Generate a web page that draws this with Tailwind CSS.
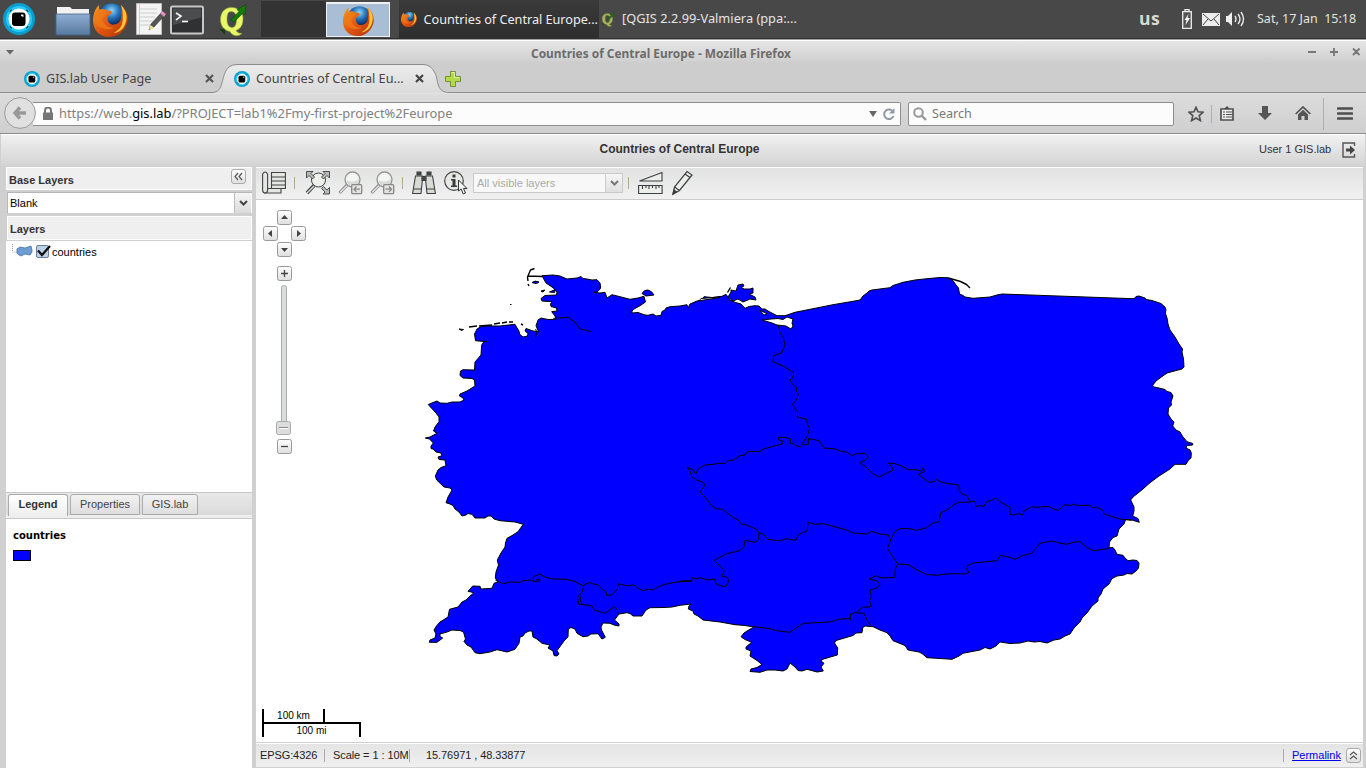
<!DOCTYPE html>
<html lang="en">
<head>
<meta charset="utf-8">
<title>Countries of Central Europe</title>
<script src="https://cdn.jsdelivr.net/npm/@tailwindcss/browser@4"></script>
</head>
<body class="w-[1366px] h-[768px] overflow-hidden bg-[#d0d0d0] font-['Liberation_Sans',sans-serif] text-[11px] text-black">
<svg width="0" height="0" class="absolute">
  <defs>
    <linearGradient id="fold" x2="0" y2="1"><stop stop-color="#90aed2"/><stop offset="1" stop-color="#57799f"/></linearGradient>
    <linearGradient id="flame" x2="1" y2="1"><stop stop-color="#f0a020"/><stop offset=".45" stop-color="#e65a10"/><stop offset="1" stop-color="#b03008"/></linearGradient>
    <radialGradient id="globe" cx=".5" cy=".25"><stop stop-color="#8fd6f8"/><stop offset=".5" stop-color="#2878bd"/><stop offset="1" stop-color="#0c2c66"/></radialGradient>
    <linearGradient id="btn" x2="0" y2="1"><stop stop-color="#fff"/><stop offset="1" stop-color="#dedede"/></linearGradient>
    <linearGradient id="tab" x2="0" y2="1"><stop stop-color="#ececec"/><stop offset="1" stop-color="#dadada"/></linearGradient>
    <symbol id="eye" viewBox="0 0 32 32"><circle cx="16" cy="16" r="16" fill="#0a9fcb"/><path d="M16 3a13 13 0 0 1 13 13 13 13 0 0 1-26 0A13 13 0 0 1 16 3" fill="#25c9fa"/><circle cx="16" cy="16" r="10.500" fill="#fff"/><path d="M7 9q0-2 2-2M25 9q0-2-2-2M7 23q0 2 2 2M25 23q0 2-2 2" fill="none" stroke="#123" stroke-width="1"/><rect x="9" y="9.500" width="13.500" height="13.500" rx="3" fill="#000"/><path d="M18 11.500h2.500v2.500l-2.500-1z" fill="#eee"/></symbol>
    <symbol id="fox" viewBox="0 0 34 34"><circle cx="18" cy="15" r="13.500" fill="url(#globe)"/><path d="M27 3c6 5 8 12 6 18-3 9-10 13-17 13C6 34 0 27 0 18 0 11 3 5 6 3v5c3-2 7-1 9 1 2-1 4 0 3 2-1 1-3 2-4 4 0 3 1 6 5 7 4 0 7-2 8-5 1-5 1-10 0-14z" fill="url(#flame)"/><path d="M27 3c6 6 7 12 4 19-2 5-7 8-11 8 6-3 9-7 9-14 0-5 0-9-2-13z" fill="#f8c838"/><path d="M1 18c0-5 2-9 5-11 4 0 6 2 8 4-3 1-5 3-5 6 1 5 5 8 12 8-9 4-18-1-20-7z" fill="#ee7b18" opacity=".75"/></symbol>
    <symbol id="q" viewBox="0 0 30 34"><path d="M1 26l6 1 0 5-2-2z" fill="#123f10"/><path d="M13.500 5C6 5 2.500 11 2.500 17S6 28 12 29c2 4 7 6 12 2-3 0-5-1-6-3 5-2 7-6 7-12 0-6-4-11-11.500-11zM13 9c4 0 5.500 3 5.500 8s-1.500 8-4.500 8-5-3-5-8 1-8 4-8z" fill="#e8f767" fill-rule="evenodd" stroke="#96a83a" stroke-width=".6"/><path d="M13 17l8-8-2-2 9-5-1 10-2.500-1-9 9z" fill="#157c0c" stroke="#0a4006" stroke-width=".6"/></symbol>
    <symbol id="lens" viewBox="0 0 24 24"><circle cx="14.500" cy="8.500" r="7.500" fill="#f4f5f3" stroke="#949693" stroke-width="1.300"/><path d="M8 9q7 4 13-1q0 7-7 7q-5-1-6-6" fill="#d9dcd6"/><path d="M9 14l-7.500 8" stroke="#8d8f8c" stroke-width="3.200"/><path d="M9 14.500l-7 7" stroke="#e4e4e4" stroke-width="1.200"/></symbol>
  </defs>
</svg>

<!-- desktop panel -->
<div class="h-[40px] flex items-center bg-[#484848] border-b border-b-[#a0a0a0] shadow-[inset_0_-1px_0_#303030] pb-px font-['Noto_Sans',sans-serif]">
  <svg class="ml-[3px]" width="32" height="32"><use href="#eye"/></svg>
  <svg class="ml-[20px] mt-[3px]" width="36" height="32" viewBox="0 0 36 32"><path d="M2 12V2h13l2 2h17v9z" fill="#f2f2f2"/><path d="M1 9h34v20a1 1 0 0 1-1 1H2a1 1 0 0 1-1-1z" fill="url(#fold)" stroke="#42628a" stroke-width=".8"/></svg>
  <svg class="ml-[2px]" width="35" height="35"><use href="#fox"/></svg>
  <svg class="ml-[7px]" width="32" height="34" viewBox="0 0 32 34"><path d="M1.500 1.500h25v31h-25z" fill="#f4f4f4" stroke="#bdbdbd"/><path d="M5 7h17M5 11h17M5 15h15M5 19h13M5 23h10" stroke="#ccc"/><path d="M4.500 2v30" stroke="#eab5b5" stroke-width=".8"/><path d="M14 28l2-6L26 11l3 3-10 11z" fill="#555" stroke="#333" stroke-width=".6"/><path d="M14 28l1.500-5 4 3z" fill="#f0df90"/><path d="M25 11l2-2 4 3-2 3z" fill="#dd91c0"/></svg>
  <svg class="ml-[3px] mt-[2px]" width="34" height="30" viewBox="0 0 34 30"><rect x="1" y="1.500" width="32" height="27" rx="1.500" fill="#2f3133" stroke="#c8c8c8" stroke-width="2"/><path d="M3 3.500h28v9L3 20z" fill="#4a4c4e"/><path d="M6 8l5 3-5 4" fill="none" stroke="#fff" stroke-width="1.600"/><path d="M12 16.500h6" stroke="#fff" stroke-width="1.600"/></svg>
  <svg class="ml-[14px]" width="30" height="35"><use href="#q"/></svg>
  <div class="ml-[13px] w-[65px] h-[36px] bg-[#333]"></div>
  <div class="w-[64px] h-[35px] mt-[1px] bg-[#a9bdd5] border border-[#f0f0f0] border-t-2 flex justify-center items-center"><svg width="31" height="31"><use href="#fox"/></svg></div>
  <div class="ml-[9px] w-[200px] h-[38px] bg-linear-to-b from-[#3a3a3a] to-[#2e2e2e] flex items-center"><svg class="ml-[2px]" width="16" height="16"><use href="#fox"/></svg><span class="ml-[6px] mt-px pl-[0.500px] text-[12.700px] tracking-[-0.030px] text-[#eee] whitespace-nowrap">Countries of Central Europe...</span></div>
  <svg class="ml-[2px] opacity-60" width="14" height="16"><use href="#q"/></svg><span class="ml-[7px] w-[180px] text-[12.800px] text-[#e4e4e4] whitespace-nowrap">[QGIS 2.2.99-Valmiera (ppa:...</span>
  <div class="ml-auto flex items-center pr-[10px]">
    <span class="font-['Open_Sans',sans-serif] text-[17.500px] font-bold text-[#d9d9d0] w-[43px] -mt-[2px] tracking-[0.500px]">us</span>
    <svg width="10" height="20" viewBox="0 0 10 20"><path d="M3 2V.700h4V2M.700 2.700h8.600v16.600H.700z" fill="#555" stroke="#eee" stroke-width="1.300"/><path d="M6.500 5L2.500 11h2L3.500 16l4.500-7H5.500z" fill="#fff"/></svg>
    <svg class="ml-[10px]" width="18" height="13" viewBox="0 0 18 13"><path d="M0 0h18v13H0z" fill="#ececec"/><path d="M1 1l8 7 8-7M1 12l5-6M17 12l-5-6" fill="none" stroke="#444"/></svg>
    <svg class="ml-[6px]" width="20" height="16" viewBox="0 0 20 16"><path d="M0 5h2l4-4v14l-4-4H0z" fill="#eee"/><path d="M9 5q2 3 0 6M12 3q4 5 0 10M15 1q5 7 0 14" fill="none" stroke="#e8e8e8" stroke-width="1.400"/></svg>
    <span class="ml-[11px] w-[99px] text-[12.500px] text-[#e4e4dc] whitespace-pre">Sat, 17 Jan  15:18</span>
  </div>
</div>

<!-- window title -->
<div class="h-[22px] flex items-center bg-linear-to-b from-[#e6e6e6] to-[#cfcfcf] border-t border-white font-['Noto_Sans',sans-serif]">
  <svg class="ml-[6px] mt-px" width="8" height="5"><path d="M0 0h8L4 4.500z" fill="#666"/></svg>
  <div class="w-[1294px] text-center text-[11.900px] font-bold text-[#6c6c6c] pt-[4px]">Countries of Central Europe - Mozilla Firefox</div>
  <svg width="54" height="10" viewBox="0 0 54 10" class="mt-[1px]" stroke="#777" stroke-width="1.800" fill="none"><path d="M0 5h8M22 5h8M26 1v8M45 1.500l6.500 6.500M51.500 1.500L45 8"/></svg>
</div>

<!-- tab strip -->
<div class="relative h-[32px] bg-[#cdcdcd]">
  <svg class="absolute left-0 top-0" width="1366" height="32"><path d="M0 30.500H212C225 30.500 220 13 229 5Q232 2.500 237 2.500H423Q431 2.500 435 11C439 20 436 30.500 450 30.500H1366V32H0z" fill="url(#tab)" stroke="#8b8b8b"/><path d="M0 31.500H1366" stroke="#e3e3e3"/></svg>
  <div class="relative flex items-center h-[32px] pt-px font-['Noto_Sans',sans-serif] text-[12.500px] text-[#444]">
    <svg class="ml-[24px]" width="16" height="16"><use href="#eye"/></svg>
    <span class="ml-[6px] w-[159px] text-[12.600px] pt-px">GIS.lab User Page</span>
    <svg width="9" height="9" viewBox="0 0 9 9"><path d="M1 1l7 7M8 1L1 8" stroke="#555" stroke-width="2.200"/></svg>
    <svg class="ml-[20px]" width="16" height="16"><use href="#eye"/></svg>
    <span class="ml-[6px] w-[159px] text-[12.700px] whitespace-nowrap pt-px">Countries of Central Eu...</span>
    <svg width="9" height="9" viewBox="0 0 9 9"><path d="M1 1l7 7M8 1L1 8" stroke="#444" stroke-width="2.200"/></svg>
    <svg class="ml-[21px]" width="16" height="16" viewBox="0 0 16 16"><path d="M5.500.500h5v5h5v5h-5v5h-5v-5h-5v-5h5z" fill="#b4d94c" stroke="#6f9430"/><path d="M6.500 1.500h3v5h5" fill="none" stroke="#e0f0a0"/></svg>
  </div>
</div>

<!-- navigation bar -->
<div class="h-[40px] flex items-center bg-linear-to-b from-[#dcdcdc] to-[#cfcfcf] border-b border-[#8c8c8c] font-['Noto_Sans',sans-serif]">
  <svg class="ml-[4px] mb-px relative" width="32" height="32" viewBox="0 0 32 32"><circle cx="16" cy="16" r="15.400" fill="#e0e0e0" stroke="#999"/><path d="M22 16H12M16 10.500L11 16l5 5.500" fill="none" stroke="#999" stroke-width="3.400"/></svg>
  <div class="-ml-[3px] w-[868px] h-[24px] bg-[#fcfcfc] border border-l-0 border-[#8d8d8d] rounded-r-[2px] flex items-center">
    <svg class="ml-[10px]" width="10" height="13" viewBox="0 0 10 13"><path d="M0 5.500h10V13H0z" fill="#777"/><path d="M2 6V3.500a3 3 0 0 1 6 0V6" fill="none" stroke="#777" stroke-width="2"/></svg>
    <span class="ml-[6px] w-[810px] pt-px text-[12.880px] text-[#808080] whitespace-nowrap">https://web.<span class="text-black">gis.lab</span>/?PROJECT=lab1%2Fmy-first-project%2Feurope</span>
    <svg class="mt-px" width="8" height="6"><path d="M0 0h8L4 6z" fill="#666"/></svg>
    <svg class="ml-[6px]" width="12" height="12" viewBox="0 0 12 12"><path d="M9 2.500A4.800 4.800 0 1 0 10.500 8" fill="none" stroke="#8d9aa6" stroke-width="2"/><path d="M11.500 0v5.500H6z" fill="#8d9aa6"/></svg>
  </div>
  <div class="ml-[7px] w-[266px] h-[24px] bg-[#fcfcfc] border border-[#8d8d8d] rounded-[2px] flex items-center"><svg class="ml-[4px]" width="14" height="14" viewBox="0 0 14 14"><circle cx="5.500" cy="5.500" r="4.300" fill="none" stroke="#999" stroke-width="2"/><path d="M8.500 8.500l4.500 4.500" stroke="#999" stroke-width="2.400"/></svg><span class="ml-[5px] text-[12.600px] text-[#777] pt-px">Search</span></div>
  <svg class="ml-[14px]" width="16" height="16" viewBox="0 0 16 16"><path d="M8 1.300l2 4.500 5 .500-3.800 3.300 1.200 5L8 12l-4.400 2.600 1.200-5L1 6.300l5-.500z" fill="none" stroke="#4f4f4f" stroke-width="1.600"/></svg>
  <div class="ml-[7px] w-px h-[18px] bg-[#a5b0ba]"></div>
  <svg class="ml-[8px] -mt-px" width="14" height="15" viewBox="0 0 14 15"><path d="M1 3h12v11H1z" fill="#eee" stroke="#4f4f4f" stroke-width="1.700"/><path d="M4 3L7 0l3 3z" fill="#4f4f4f"/><path d="M3 6h2M6 6h6M3 8.500h2M6 8.500h6M3 11h2M6 11h6" stroke="#4f4f4f" stroke-width="1.100"/></svg>
  <svg class="ml-[24px] -mt-px" width="14" height="14" viewBox="0 0 14 14"><path d="M4 0h6v7h4l-7 7-7-7h4z" fill="#555"/></svg>
  <svg class="ml-[23px]" width="16" height="15" viewBox="0 0 16 15"><path d="M.700 8L8 1l7.300 7" fill="none" stroke="#4f4f4f" stroke-width="1.700"/><path d="M3 8.500l5-4.800 5 4.800V14H9.500v-4h-3v4H3z" fill="#555"/></svg>
  <div class="ml-[12px] w-px h-[32px] bg-[#a5b0ba]"></div>
  <svg class="ml-[13px] -mt-px" width="16" height="13" viewBox="0 0 16 13"><path d="M1 1.500h14M1 6.500h14M1 11.500h14" stroke="#4f4f4f" stroke-width="2.600" stroke-linecap="round"/></svg>
</div>

<!-- page header -->
<div class="mx-px h-[32px] bg-linear-to-b from-[#f1f1f1] to-[#d3d3d3] border-t border-white flex">
  <div class="ml-[578px] w-[201px] text-center text-[12px] font-bold text-[#333] pt-[5px]">Countries of Central Europe</div>
  <div class="ml-auto text-[11px] text-[#333] pt-[6px] w-[73px] whitespace-nowrap">User 1 GIS.lab</div>
  <svg class="ml-[10px] mr-[9px] mt-[7px]" width="14" height="16" viewBox="0 0 14 16"><path d="M12.500 4V1H1v14h11.500v-3" fill="none" stroke="#555" stroke-width="1.400"/><path d="M4 6.500h4V3.500L13 8l-5 4.500v-3H4z" fill="#444"/></svg>
</div>

<!-- workspace -->
<div class="mt-px pl-[6px] pr-[3px] flex h-[601px]">
  <aside class="w-[246px] flex flex-col h-full">
    <div class="h-[23px] bg-[#efefef] border border-white flex items-start justify-between"><b class="pl-[2px] pt-[4px] text-[#333]">Base Layers</b>
      <svg class="mr-[5px] mt-px" width="15" height="15" viewBox="0 0 15 15"><rect x=".5" y=".5" width="14" height="14" rx="2.500" fill="url(#btn)" stroke="#aaa"/><path d="M7 4L4 7.500 7 11M11 4L8 7.500l3 3.500" fill="none" stroke="#555" stroke-width="1.200"/></svg></div>
    <div class="mt-[2px] ml-px h-[21px] border-t border-l border-[#b5b8bb] bg-white flex items-center"><span class="pl-[2px] w-[226px] pt-px">Blank</span><div class="w-[17px] h-full bg-linear-to-b from-[#f6f6f6] to-[#dadada] border-l border-[#bbb] flex justify-center items-center"><svg width="9" height="6" viewBox="0 0 9 6"><path d="M1 1l3.500 3.500L8 1" fill="none" stroke="#444" stroke-width="2"/></svg></div></div>
    <div class="mt-[3px] ml-px h-[24px] bg-[#efefef] border border-white"><b class="block pl-[2px] pt-[4px] text-[#333]">Layers</b></div>
    <div class="mt-px h-[251px] bg-white flex items-start pt-[3px]">
      <svg class="ml-[6px]" width="40" height="16" viewBox="0 0 40 16"><path d="M.500-2v10H5" fill="none" stroke="#aaa" stroke-dasharray="1 1"/><path d="M5 5l3-2 5 1 6-2 1 4 0 2-2 3-5-1-4 2-2-1-2-2z" fill="#6d9dd1" stroke="#3f74ad" stroke-width=".8"/><rect x="24.500" y="1.500" width="12" height="12" rx="1.500" fill="#bcd0e6" stroke="#65809d"/><path d="M26 6.500l4 4.500 8-9" fill="none" stroke="#111" stroke-width="2.300"/></svg>
      <span>countries</span>
    </div>
    <div class="h-[27px] bg-linear-to-b from-[#e9e9e9] to-[#d8d8d8] border-y border-[#c8c8c8] flex items-start pt-px shadow-[inset_0_-3px_0_#eee] text-[#444]">
      <div class="ml-[2px] w-[60px] h-[22px] bg-linear-to-b from-white to-[#eee] border border-b-0 border-[#aaa] rounded-t-[3px] text-center font-bold text-[#333] pt-[1px]">Legend</div>
      <div class="ml-[2px] w-[70px] h-[21px] bg-linear-to-b from-[#f2f2f2] to-[#dedede] border border-[#aaa] rounded-t-[3px] text-center pt-[1px]">Properties</div>
      <div class="ml-[2px] w-[56px] h-[21px] bg-linear-to-b from-[#f2f2f2] to-[#dedede] border border-[#aaa] rounded-t-[3px] text-center pt-[1px]">GIS.lab</div>
    </div>
    <div class="flex-1 bg-white pl-[7px] pt-[9px] font-['DejaVu_Sans',sans-serif]">
      <div class="font-bold text-[10px] leading-[15px]">countries</div>
      <div class="mt-[7px] w-[18px] h-[11px] bg-[#0000ff] border border-black"></div>
    </div>
  </aside>

  <main class="ml-[4px] w-[1107px] h-full flex flex-col">
    <div class="h-[33px] pb-px bg-linear-to-b from-[#e2e2e2] to-[#f1f1f1] border-t border-white border-b border-b-[#ccc] flex items-center">
      <svg class="ml-[6px]" width="24" height="24" viewBox="0 0 24 24" fill="#e5e7e2" stroke="#444" stroke-width="1.100"><path d="M6 17.500h13v4.500H3z"/><path d="M.600 3q2.400-4 5 0v16q0 3-2.500 3T.600 19z"/><path d="M9.500 1.500h13.900v16H9.500z"/><path d="M9 6h14M9 10h14M9 14h14"/></svg>
      <div class="ml-[8px] w-px h-[12px] bg-[#b5a98e]"></div>
      <svg class="ml-[10px]" width="26" height="26" viewBox="0 0 26 26"><g stroke="#3c4040" stroke-width=".9"><circle cx="13.500" cy="10" r="7" fill="#eef0ec" stroke-width="1"/><path d="M9 15.500L2 23" stroke-width="3.600"/><path d="M9 16l-7 7" stroke="#ddd" stroke-width="1.400"/><path d="M1.500 1.500h6.500L6 3.500l3.500 3.500L7.500 9 4 5.500 1.500 8zM24.500 1.500h-6.500l2 2-3.500 3.500L18.500 9 22 5.500l2.500 2.500zM24.500 24h-6.500l2-2-3.500-3.500L18.500 16.500l3.500 3.500 2.500-2.500z" fill="#b7bab5"/></g></svg>
      <svg class="ml-[7px]" width="26" height="24" viewBox="0 0 26 24"><svg width="24" height="24"><use href="#lens"/></svg><rect x="13.700" y="13.700" width="10" height="9" rx="1" fill="#e4e4e2" stroke="#888" stroke-width="1.300"/><path d="M22 18.200h-5M18.500 15.500l-2.500 2.700 2.500 2.700" fill="none" stroke="#888" stroke-width="1.300"/></svg>
      <svg class="ml-[6px]" width="26" height="24" viewBox="0 0 26 24"><svg width="24" height="24"><use href="#lens"/></svg><rect x="13.700" y="13.700" width="10" height="9" rx="1" fill="#e4e4e2" stroke="#888" stroke-width="1.300"/><path d="M15.500 18.200h5M19 15.500l2.500 2.700-2.500 2.700" fill="none" stroke="#888" stroke-width="1.300"/></svg>
      <div class="ml-[6px] w-px h-[12px] bg-[#b5a98e]"></div>
      <svg class="ml-[9px]" width="24" height="24" viewBox="0 0 24 24" fill="#d8dbd4" stroke="#3d4141" stroke-width="1.100"><path d="M3.500 5L.600 22.500h8.400L10.500 8V5zM20.500 5l2.900 17.500H15L13.500 8V5zM1.500 18h8M14.500 18h8"/><path d="M5 1h4v3h-4zM15 1h4v3h-4zM10 5.500h4v4h-4z" fill="#444"/></svg>
      <svg class="ml-[8px]" width="24" height="24" viewBox="0 0 24 24"><circle cx="10" cy="10" r="9.300" fill="#e6e8e3" stroke="#444" stroke-width="1.200"/><path d="M8.500 3.500h3v3h-3zM7 8h4.500v6.500H13V16H7v-1.500h1.500v-5H7z" fill="#3b3b3b"/><path d="M14.500 9v11l2.700-2 2 5 2.300-1-2-4.500h3.500z" fill="#f2f2f2" stroke="#333"/></svg>
      <div class="ml-[5px] w-[150px] h-[20px] border border-[#c8cac9] bg-[#f8f8f8] flex items-center text-[#aaa]"><span class="pl-[3px] w-[131px] pt-px">All visible layers</span><div class="w-[17px] h-full border-l border-[#ccc] bg-linear-to-b from-[#f6f6f6] to-[#e0e0e0] flex items-center justify-center"><svg width="9" height="6" viewBox="0 0 9 6"><path d="M1 1l3.500 3.500L8 1" fill="none" stroke="#777" stroke-width="2"/></svg></div></div>
      <div class="ml-[5px] w-px h-[12px] bg-[#b5a98e]"></div>
      <svg class="ml-[9px]" width="25" height="24" viewBox="0 0 25 24" fill="#eceeea" stroke="#3c4040" stroke-width="1.100"><path d="M1.500 10L24 1.500V10zM.600 14.500h23.500v8H.600z"/><path d="M4.500 14v4M8 14v3M11 14v4M14.500 14v3M18 14v4M21 14v3" fill="none"/></svg>
      <svg class="ml-[9px]" width="22" height="26" viewBox="0 0 22 26" fill="#eceeea" stroke="#3c4040" stroke-width="1.200"><path d="M1 24l1.500-7L15 1.500l5 3.500L7.500 20.500z"/><path d="M2.500 17l5 3.500M13 4l5 3.500"/><path d="M1 24l1-4 2.500 2z" fill="#333"/></svg>
    </div>

    <div class="relative h-[542px] bg-white overflow-hidden">
      <svg class="absolute inset-0" width="1107" height="542" viewBox="256 200 1107 542">
        <g stroke="#000" stroke-width="1" stroke-linejoin="round" fill="#0000ff">
          <path d="M542 275.700L553 275 560 276 567 279 577 278 581 276.500 583 278.500 587 279 592 280 597 279.700 600 283 600.700 287 600 289.300 597 292 593 292.300 600 293 605 292.300 607 298 612 294.700 620 296.700 630 299.300 638 298 644 296.300 645.500 302 640 305.700 634 309 632 311 632 313 638 312.500 645 315 648 315.300 653 314 656 316 661 315.300 662 311.500 665 310 666 308 670 306.700 680 306 687 304.700 688 308 690 304 697 301 702 300 704 296.700 712 297.500 722 296.300 726 294.300 730 300 735 302.300 741 304 745 308.300 749 306.500 755 305.700 759 306 762 309 765 309 768 311 777 315.700 785 315.700 795 312.300 813 308.700 833 304.700 853 301.300 860 300 863 296 867 293 869 291 872 290 890 287.700 893 285.500 903 282.300 915 280 927 278.700 940 277.500 948 277.700 953 280.700 956 285 958.500 288 959.500 294 963 295.500 965 297 973 298.300 990 297 997 295 1002 294 1133 298.700 1135 298 1136 296.500 1139 296 1145 298 1146 299.500 1152 300.500 1158 302.500 1161 303.500 1165 307 1166 310 1165.300 313 1167 318 1168 324 1170 330 1175 337 1179 344 1182.500 349 1182 352 1183.500 359 1184 367 1182 369 1178 370 1167 373 1160 378 1156 381 1152.700 385.300 1154 387 1159 388 1165 389.500 1167 391.500 1171 392.500 1173 396 1171 402 1171.500 405 1168.500 408 1168 414 1171 419 1174 422 1172.700 426 1176 430 1180 432 1183 437 1187 441.700 1192.700 443.500 1192.700 445 1187 445.500 1186 448 1190 450 1191.300 453 1191 458 1188.500 460 1186 464.300 1175 464.300 1170 469 1159 476 1150 482.700 1143 489 1133 497 1130.700 500 1134 507 1134 511 1132.700 516 1138 518.500 1139.300 522.300 1132 520 1125.700 519.300 1124 524 1119 529 1117 536 1113 537.500 1109.500 542 1109 547.700 1113 547.500 1115 550 1117 554.300 1123 555.300 1125 558 1128 560.700 1133 560 1137 560.500 1139 563 1138.500 568 1136 571 1132 574 1127 573.500 1124 575 1117 576 1112 578.500 1109 584 1103 589 1101 594 1098 598 1098 601 1092 606 1087 613 1082 618 1080 622 1074 628 1070 634 1065 636 1060 639 1054 640 1047 643 1040 641.500 1034 642 1028 641 1020 643 1010 643.500 1000 642 996 646 990 649 985 647.500 980 650 972 651.500 963 653.300 959 656 952 659.300 940 658.500 927 657.700 922 653.500 919 652 908 650 905 645.500 900 643.500 893 640.700 890 636 887 632.700 880 630 873 626.700 865 626 862.700 627.700 862 632.700 856 633 853 635.500 847 637.300 836 640.500 834.500 643 837.700 648 837.300 655 832 656.500 822 659.500 821 661 824 663.300 821 667 823.300 671 817 672 807 669.300 802 671 798 670.500 795 667 790 663 787 669 783 671 775 670 767 670 760 672.300 750 671.500 751 669 757 667.500 762 664.500 757 660.500 750 656 751 651 746 649 746 647 751.700 642.300 745 639.500 741 636.700 744 633 747 631 754 627 745 625.500 735 624.700 720 622 703 620 698 616 694 614 693 611 688.300 609 689 606 691 604 680 605.300 672 607 664 607.500 650 607.700 646 610 642 616 633 616 630 613.500 627 612.700 619 614 614.500 620 619 624 619 626 614 625 610 623.300 603 623 601 627 601.500 630 605.300 637.300 602 639 598 633.700 591 634 588 636 583 636.700 577 633.300 575 629 571 627.500 568.300 629 568 637 564 641 557 650.700 559 654 557 656 554 655.500 553 651 548 648 550 645 542 643.300 537 639 533 637 532 631 529 631 525 633 523 636 520 637 519 643.300 515 649.300 510 651 507 652 497 649.700 490 652 480 653.700 475 652.700 471 647 467 645 464 641.500 465.500 639 463.500 632 460 630.500 452 630 447 632 440 634 440 636.500 442.700 638 437 642.300 429.300 642.300 430 640 435 638 436 634 434 630 436.500 626 440 622 448 617 449.500 609.300 458 607 462 602 466 600 470 596 474 592.700 468 591.300 472.700 586 480 586.300 481 589 492 588.300 494 583.300 498 581.700 495.300 578 496 572 498.500 565 497.300 560 501 553 505 547 505.500 543 507 538.300 513 535 518 531.700 523.300 524.300 515 522 500 520.700 494 519 491 516 488 516 485 518 475 518 472 514.300 468 513.500 466 515 462 516 459 512 455 509 453 505.500 450 504 446 502.700 448 497 452 490 450 488 444 487 436.700 480 435.300 476 438 470 441 467.500 446 465.700 445 460 439 459.500 438 457 442 455.700 441 453 436 452 433 449 431 448.500 431 446 433.300 443 429.500 439 425.300 438 430 437 437 433.300 433.500 431 435 427 439 421.700 439 417 436 413 430 406.500 428.300 404.500 433 402.500 437 401 440 403 447 403.300 452 402 460 402 464 400 463 398 459.500 396 460 394 467 391 475 386 474.500 380 472 378.500 463 378 460 375.500 460.500 371 463 369.700 474.500 370 475 362 481 355 481.700 345 484 341.500 487 341.700 475.500 340.700 474.500 334 477 329 482 326 500 326 515 324.300 517 328 519 331 519.500 334 523 337 527.500 336 528 333.500 525 331 526 328.500 533 331 538.500 331.700 536 325.700 538 320 541 318 548 319.500 556 319.300 555 316 551.700 311.700 557 311 556.500 308 551 306.500 550.500 304 552 301.700 542 301 541 298.500 545 295.500 556.500 295 557 292 553 287.700 546 283z"/>
          <path d="M642 293.500q2-4 6-3.500 4 1 6 5l-8 1zM532 282.500q3-2.500 7-.500-2 2.500-7 .500zM541 291l4-1-2 2zM549.500 292l6-2.500-1 3zM510 304.500h1.500M459 329l4.500.500-2 1zM731 290l5 1 2-6 5-1 1 2-3 1 3 2 6 0 3-1 0 5-4 1 6 3 1 3-6-1-7 3-5-3-5 2-5-4 3-5z"/>
          <path d="M528 281l-.500-4 3-7 4-1.500M528 276l14 .500M528 284l1 2M469 327l8-1M479 326l13-1M494 324l6-1M502 323l5-1M509 322h4M948.500 278l12 3.500 6 3 3.500 3.500M727.500 292.500l3-5M521 324l2 1" fill="none" stroke-width="1.400"/>
          <path d="M762 320l9-1 7-.500 5 1 4-2.500 6 2-1 4 1 3-2 3-5-3-9-1-5-2zM701 298.500l19-1.500-3 1-13 2-5 1zM760 310.500l7 3-3 1.500z" fill="#fff"/>
        </g>
        <!-- inland borders, drawn at triple size -->
        <g fill="none" stroke="#000" stroke-width="3" stroke-linejoin="round">
          <g transform="translate(420 255) scale(.33333)"><path d="M345 250l5-18-3-10M400 190l45-3 20 15 16 20 34 8"/></g>
          <g transform="translate(680 265) scale(.33333)"><path d="M295 180L300 202 309 215 315 239 306 263 282 272 278 290 313 305 341 323 338 338 330 345 338 358 350 367 348 378 355 385 350 405 337 417 343 428 353 440 352 456 380 463 382 478 389 490 381 515 365 538 370 540 385 538 385 521 405 524 418 528 432 549 467 552 480 558 502 562 514 572 530 566 555 565 566 576 555 586 540 592 545 598 555 603 578 625 598 636 618 625 640 615 636 606 625 594 645 596 665 603 685 614 708 614 724 618 730 607 733 620 715 628 735 643 747 652 765 649 770 643 780 650 795 654 820 658 836 660 840 672M363 546L345 541 340 535 330 535 332 522 316 517 296 517 296 525 310 529 306 537 250 552 240 559 203 560 195 570 180 572 160 585 145 587 135 595 115 595 100 598 75 600 55 612 47 627 40 615 22 607 30 618 35 635 50 645 70 652 75 662 60 680 85 708 92 720 108 731 128 733 150 750 160 758 175 765 185 778"/></g>
          <g transform="translate(940 270) scale(.33333)"><path d="M57 650L57 660 65 671 82 678 87 690 92 694 105 694 108 710 118 707 132 709 140 695 158 690 168 683 180 695 210 712 210 733 220 735 235 731 248 735 252 723 275 710 290 712 325 709 340 717 355 721 365 712 372 705 395 706 400 702 410 706 450 706 458 713 470 711 490 722 492 732 520 741 545 748 565 750 575 751M507 835L490 838 460 842 440 832 420 815 405 816 378 823 355 818 335 813 300 820 290 832 275 850 250 856 225 868 205 861 180 856 172 872 140 875 100 879 82 887 80 900 88 906 78 912 35 911 0 914"/></g>
          <g transform="translate(680 480) scale(.33333)"><path d="M872 66L835 67 820 75 805 88 782 98 778 125 757 130 740 143 710 151 690 146 660 146 645 155 632 180 622 205 635 225 653 252 645 270 645 292 605 294 588 287 567 297 592 303 600 313 592 323 570 330 574 352 569 362 574 380 548 382 532 395M780 286L740 284 712 270 685 254 653 252M185 133L195 133 215 142 230 148 237 158 250 163 265 178 300 183 318 176 348 181 355 165 368 157 380 155 385 127 405 133 430 131 500 150 520 159 560 162 575 154 600 162 625 165 632 180M237 158L236 178 226 187 195 181 192 200 180 212 140 221 103 241 133 272 125 288 142 292 146 302 138 320 120 317 107 310 104 297 82 300 60 293 48 297 36 292 35 302 0 303M222 440L270 446 290 452 330 457 350 443 370 430 450 426 475 418 510 415 512 402 525 398 552 400 558 413 565 428 578 440M510 412L513 422"/></g>
          <g transform="translate(420 480) scale(.33333)"><path d="M226 300L235 305 250 311 270 306 300 307 310 302 330 300 345 305 360 302 358 297 348 300M340 298L340 290 360 282 372 290 385 294 400 297 440 298 465 305 490 318 497 312 510 308 520 312 535 315 550 330 558 335 560 346 575 345 592 328 595 311 625 318 640 314 655 325 668 332 685 328 700 330 715 320 740 312 770 306 816 303M492 315L487 335 473 352 475 372 515 377 522 390 555 400 583 380 592 388 594 402M484 347L480 358 486 372"/></g>
        </g>
      </svg>

      <!-- pan and zoom controls -->
      <svg class="absolute left-[7px] top-[9px]" width="43" height="246" viewBox="0 0 43 246">
        <g fill="url(#btn)" stroke="#999"><rect x="14.500" y="1.500" width="14" height="14" rx="2"/><rect x=".5" y="17.500" width="14" height="14" rx="2"/><rect x="28.500" y="17.500" width="14" height="14" rx="2"/><rect x="14.500" y="33.500" width="14" height="14" rx="2"/><rect x="14.500" y="57.500" width="14" height="14" rx="2"/></g>
        <path d="M18 10h7l-3.500-4zM18 39h7l-3.500 4zM9 21v7l-4-3.500zM34 21v7l4-3.500z" fill="#444"/>
        <path d="M18 64.500h7M21.500 61v7" stroke="#444" stroke-width="1.300"/>
        <rect x="18.500" y="76.500" width="5" height="140" rx="2" fill="#dcdcda" stroke="#a7acb0"/>
        <rect x="13.500" y="212.500" width="14" height="13" rx="2" fill="#ddd" stroke="#aaa"/><path d="M16 218.500h9" stroke="#888"/><path d="M16 219.500h9" stroke="#fff"/>
        <rect x="14.500" y="230.500" width="14" height="14" rx="2" fill="url(#btn)" stroke="#999"/><path d="M18 237.500h7" stroke="#444" stroke-width="1.300"/>
      </svg>

      <!-- scale bar -->
      <div class="absolute left-[6px] top-[509px] text-[10px] text-center leading-[12px]">
        <div class="w-[63px] h-[15px] border-2 border-t-0 border-black pt-px">100 km</div>
        <div class="-mt-[2px] w-[99px] h-[15px] border-2 border-b-0 border-black pt-px">100 mi</div>
      </div>
    </div>

    <div class="mt-px h-[24px] bg-linear-to-b from-[#e4e4e4] to-[#f0f0f0] border-t border-white flex items-center text-[#222]">
      <span class="ml-[4px] w-[64px] tracking-[-0.100px]">EPSG:4326</span><i class="w-px h-[13px] bg-[#aaa]"></i>
      <span class="ml-[8px] w-[76px] whitespace-nowrap tracking-[-0.080px]">Scale = 1 : 10M</span><i class="w-px h-[13px] bg-[#aaa]"></i>
      <span class="ml-[16px] tracking-[-0.080px]">15.76971 , 48.33877</span>
      <i class="ml-auto w-px h-[13px] bg-[#aaa]"></i><span class="ml-[8px] w-[48px] underline text-[#0000ee]">Permalink</span>
      <svg class="ml-[6px] mr-[2px] -mt-px" width="15" height="15" viewBox="0 0 15 15"><rect x=".5" y=".5" width="14" height="14" rx="2.500" fill="url(#btn)" stroke="#aaa"/><path d="M4 7l3.500-3L11 7M4 11l3.500-3 3.500 3" fill="none" stroke="#555" stroke-width="1.200"/></svg>
    </div>
  </main>
</div>
</body>
</html>
